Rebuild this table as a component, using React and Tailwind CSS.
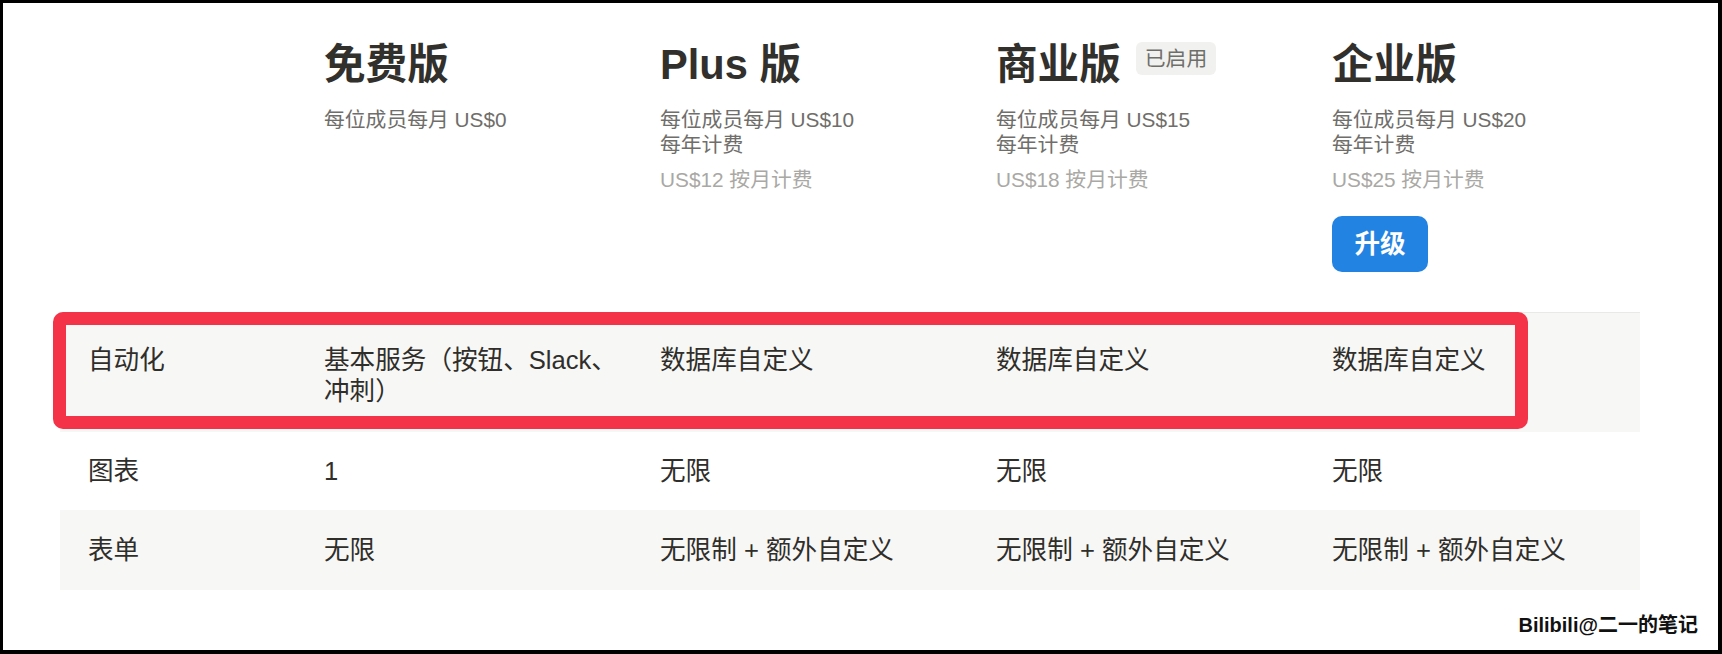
const plans = [
  { name: '免费版', price: '每位成员每月 US$0' },
  { name: 'Plus 版', price: '每位成员每月 US$10', billing: '每年计费', monthly: 'US$12 按月计费' },
  { name: '商业版', price: '每位成员每月 US$15', billing: '每年计费', monthly: 'US$18 按月计费', current: true },
  { name: '企业版', price: '每位成员每月 US$20', billing: '每年计费', monthly: 'US$25 按月计费', upgrade: true },
];

const rows = [
  {
    label: '自动化',
    values: ['基本服务（按钮、Slack、冲刺）', '数据库自定义', '数据库自定义', '数据库自定义'],
    className: 'bg-[#f7f7f5] pt-[32px] pb-[25px]',
  },
  {
    label: '图表',
    values: ['1', '无限', '无限', '无限'],
    className: 'bg-white pt-[24px] pb-[23px]',
  },
  {
    label: '表单',
    values: ['无限', '无限制 + 额外自定义', '无限制 + 额外自定义', '无限制 + 额外自定义'],
    className: 'bg-[#f7f7f5] pt-[25px] pb-[24px]',
  },
];

const PlanHeader = ({ plan }) => (
  <div className="pl-[28px] pb-[40px]">
    <div className="flex items-start">
      <h2 className="text-[41.6px] leading-[50px] font-bold text-[#32302c] whitespace-nowrap">{plan.name}</h2>
      {plan.current && (
        <span className="ml-[15px] mt-[2px] h-[33px] px-[9px] rounded-md bg-[#f1f1ef] text-[#6f6e69] text-[20.8px] leading-[33px]">
          已启用
        </span>
      )}
    </div>
    <div className="mt-[17px] text-[20.8px] leading-[25px]">
      <p className="text-[#6f6e6a]">{plan.price}</p>
      {plan.billing && <p className="text-[#6f6e6a]">{plan.billing}</p>}
      {plan.monthly && <p className="mt-[10px] text-[#a9a8a4]">{plan.monthly}</p>}
    </div>
    {plan.upgrade && (
      <button className="mt-[24px] h-[56px] w-[96px] rounded-[10px] bg-[#2383e2] text-white text-[25.6px] font-bold">
        升级
      </button>
    )}
  </div>
);

export default function App() {
  return (
    <div className="w-[1722px] h-[654px] bg-black pt-[3px] pl-[3px] pr-[4px] pb-[4px] flex font-['Liberation_Sans','Noto_Sans_CJK_SC',sans-serif]">
      <div className="relative flex-1 bg-white pl-[57px] pt-[37px]">
        {/* 表头：各个版本 */}
        <div className="grid grid-cols-[236px_repeat(4,336px)]">
          <div />
          {plans.map((plan) => (
            <PlanHeader key={plan.name} plan={plan} />
          ))}
        </div>

        {/* 功能对比表 */}
        <div className="relative w-[1580px] border-t border-[#e9e9e7]">
          {rows.map((row) => (
            <div
              key={row.label}
              className={`grid grid-cols-[236px_repeat(4,336px)] text-[25.6px] leading-[31px] text-[#2f2e2b] ${row.className}`}
            >
              <div className="pl-[28px]">{row.label}</div>
              {row.values.map((v, i) => (
                <div key={i} className="pl-[28px]">{v}</div>
              ))}
            </div>
          ))}

          {/* 红色标注框 */}
          <div className="absolute left-[-7px] top-[-1px] w-[1475px] h-[117px] border-[13px] border-[#f43349] rounded-[10px] pointer-events-none" />
        </div>

        <span className="absolute right-[20px] bottom-[13px] text-[20px] leading-[24px] font-bold text-[#111]">
          Bilibili@二一的笔记
        </span>
      </div>
    </div>
  );
}
